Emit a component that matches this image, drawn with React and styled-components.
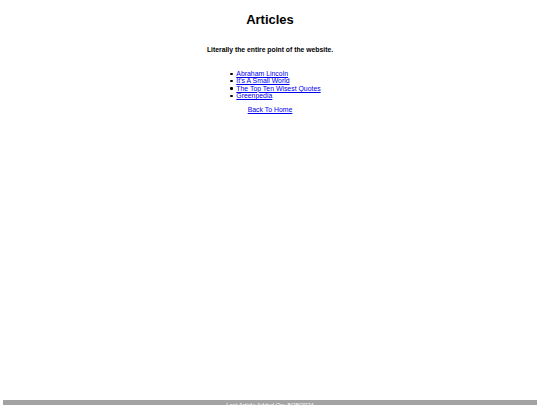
import React from "react";
import styled, { createGlobalStyle } from "styled-components";

const Global = createGlobalStyle`
  html, body { margin: 0; padding: 0; background: #fff; overflow: hidden; }
  body { font-family: "Liberation Sans", Arial, sans-serif; }
`;

const Page = styled.div`
  display: flex;
  flex-direction: column;
  padding: 0 3px;
  height: 405px;
  box-sizing: border-box;
`;

const Main = styled.main`
  height: 400px;
  flex: none;
  display: flex;
  flex-direction: column;
  align-items: center;
  text-align: center;
`;

const Title = styled.h1`
  margin: 12px 0 0;
  font-size: 13px;
  line-height: 16px;
  font-weight: bold;
  color: #000;
`;

const Subtitle = styled.h4`
  margin: 18px 0 0;
  font-size: 6.8px;
  line-height: 8px;
  font-weight: bold;
  color: #000;
`;

const List = styled.ul`
  margin: 16px 0 0;
  padding-left: 11px;
  text-align: left;
  font-size: 6.9px;
  line-height: 7.4px;
  list-style: none;
`;

const Item = styled.li`
  display: flex;
  align-items: center;
  color: #000;

  &::before {
    content: "";
    flex: none;
    width: 2.2px;
    height: 2.2px;
    border-radius: 50%;
    background: #000;
    margin-right: 3.8px;
  }
`;

const Link = styled.a`
  color: #0000ee;
  text-decoration: underline;
`;

const Home = styled.p`
  margin: 6px 0 0;
  font-size: 6.9px;
  line-height: 8px;
`;

const Footer = styled.footer`
  flex: none;
  background: #a3a3a3;
  color: #fff;
  text-align: center;
  font-size: 6px;
  line-height: 10px;
  height: 10px;
`;

const articles = [
  "Abraham Lincoln",
  "It's A Small World",
  "The Top Ten Wisest Quotes",
  "Greenpedia",
];

export default function App() {
  return (
    <>
      <Global />
      <Page>
        <Main>
          <Title>Articles</Title>
          <Subtitle>Literally the entire point of the website.</Subtitle>
          <List>
            {articles.map((a) => (
              <Item key={a}>
                <Link href="#">{a}</Link>
              </Item>
            ))}
          </List>
          <Home>
            <Link href="#">Back To Home</Link>
          </Home>
        </Main>
        <Footer>Last Article Added On: 8/28/2024</Footer>
      </Page>
    </>
  );
}
